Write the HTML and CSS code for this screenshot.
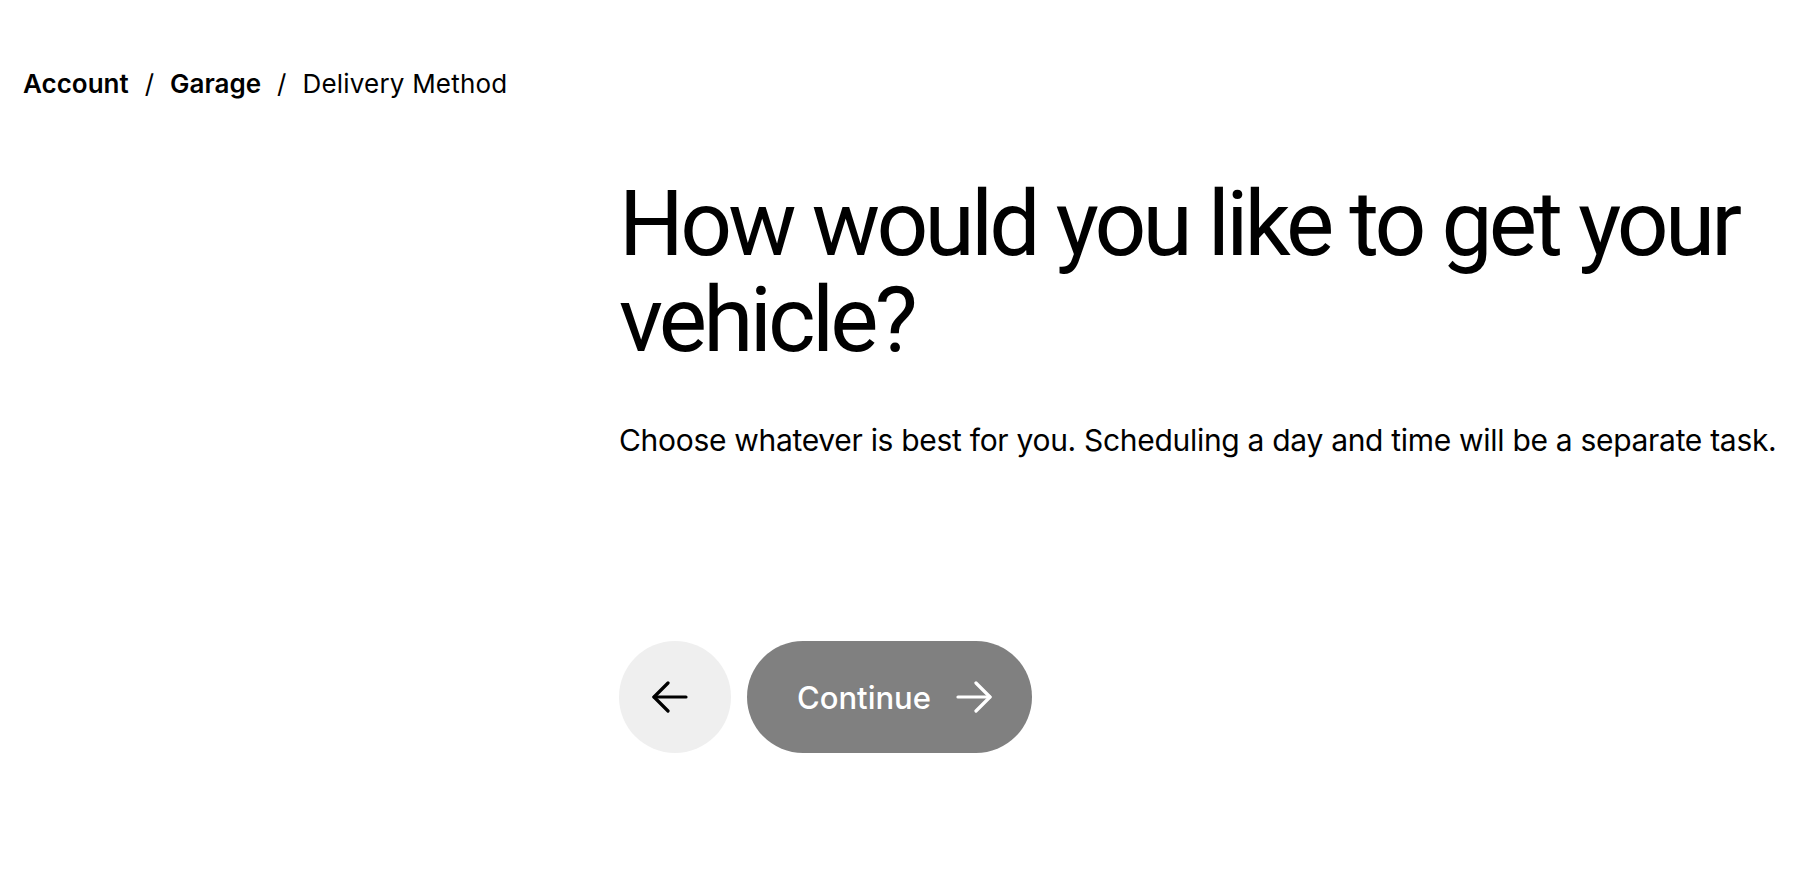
FILE: index.html
```html
<!DOCTYPE html>
<html lang="en">
<head>
    <meta charset="UTF-8">
    <meta name="viewport" content="width=device-width, initial-scale=1.0">
    <title>Delivery Method</title>
    <link rel="stylesheet" href="styles.css">
</head>
<body>
    <div class="page">
        <nav class="breadcrumb">
            <a href="#" class="crumb">Account</a>
            <span class="sep">/</span>
            <a href="#" class="crumb">Garage</a>
            <span class="sep">/</span>
            <span class="current">Delivery Method</span>
        </nav>

        <main class="content">
            <h1 class="title">How would you like to get your vehicle?</h1>
            <p class="subtitle">Choose whatever is best for you. Scheduling a day and time will be a separate task.</p>

            <div class="actions">
                <button class="back-btn" aria-label="Back">
                    <svg width="36" height="36" viewBox="0 0 36 36" fill="none" stroke="#000" stroke-width="3.2" stroke-linecap="round" stroke-linejoin="round">
                        <path d="M34 18H2"/>
                        <path d="M16 4L2 18l14 14"/>
                    </svg>
                </button>
                <button class="continue-btn">
                    Continue
                    <svg width="36" height="36" viewBox="0 0 36 36" fill="none" stroke="#fff" stroke-width="3.2" stroke-linecap="round" stroke-linejoin="round">
                        <path d="M2 18h32"/>
                        <path d="M20 4l14 14-14 14"/>
                    </svg>
                </button>
            </div>
        </main>
    </div>
</body>
</html>
```

FILE: styles.css
```css
body {
    margin: 0;
    font-family: Inter, "Noto Sans", sans-serif;
    color: #000;
    background: #fff;
}
.page {
    padding: 64px 23px 0;
}
.breadcrumb {
    display: flex;
    align-items: baseline;
    gap: 16px;
    font-size: 26px;
    line-height: 40px;
}
.crumb {
    color: #000;
    text-decoration: none;
    font-weight: 600;
}
.sep {
    font-weight: 400;
}
.current {
    font-weight: 400;
    letter-spacing: 0.2px;
}
.content {
    margin-left: 596px;
    margin-top: 72px;
}
.title {
    margin: 0;
    font-family: Roboto, "Liberation Sans", sans-serif;
    font-size: 91px;
    font-weight: 400;
    line-height: 96px;
    letter-spacing: -3.75px;
    max-width: 1170px;
}
.subtitle {
    margin: 52px 0 0;
    font-size: 30px;
    line-height: 40px;
    letter-spacing: -0.3px;
}
.actions {
    display: flex;
    gap: 16px;
    margin-top: 181px;
}
.back-btn {
    width: 112px;
    height: 112px;
    border: none;
    border-radius: 50%;
    background: #efefef;
    display: flex;
    align-items: center;
    justify-content: center;
    padding: 0 10px 0 0;
    cursor: pointer;
}
.continue-btn {
    height: 112px;
    border: none;
    border-radius: 56px;
    background: #808080;
    color: #fff;
    font-family: inherit;
    font-size: 31px;
    font-weight: 500;
    padding: 0 40px 0 50px;
    display: flex;
    align-items: center;
    gap: 25px;
    cursor: pointer;
}
```
